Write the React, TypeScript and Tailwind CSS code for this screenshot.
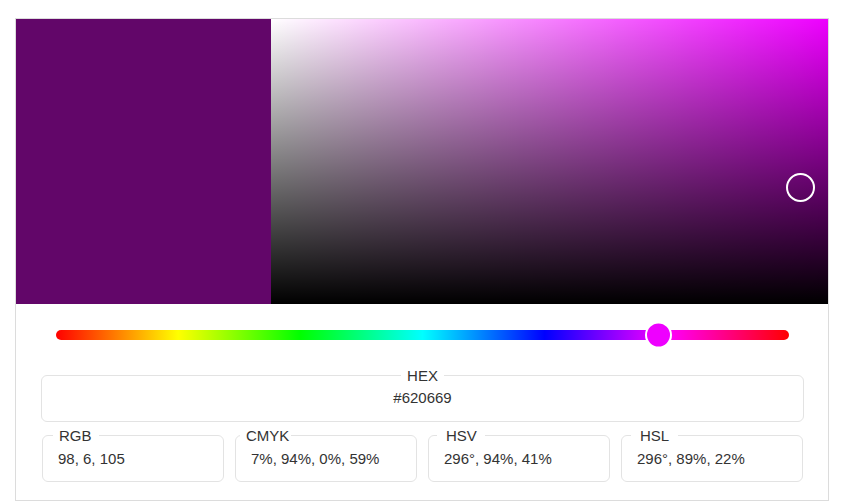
import React from "react";

type Field = { label: string; value: string; cls: string };

const fields: Field[] = [
  { label: "RGB", value: "98, 6, 105", cls: "ml-[10px] pl-[6px] pr-[7px]" },
  { label: "CMYK", value: "7%, 94%, 0%, 59%", cls: "ml-[4px] pl-[6px] pr-[2px]" },
  { label: "HSV", value: "296°, 94%, 41%", cls: "ml-[8px] pl-[9px] pr-[8px]" },
  { label: "HSL", value: "296°, 89%, 22%", cls: "ml-[9px] pl-[9px] pr-[9px]" },
];

export default function App() {
  return (
    <div
      className="bg-white pt-[18px] pl-[15px] text-[#333] text-[15px]"
      style={{ fontFamily: '"Liberation Sans", Arial, sans-serif' }}
    >
      <div className="w-[814px] h-[483px] border border-[#dcdcdc] flex flex-col">
        <div className="flex h-[285px]">
          <div className="w-[255px] bg-[#620669]" />
          <div className="relative flex-1 bg-[#ee00ff]">
            <div className="absolute inset-0 bg-[linear-gradient(to_right,#ffffff,rgba(255,255,255,0))]" />
            <div className="absolute inset-0 bg-[linear-gradient(to_bottom,rgba(0,0,0,0),#000000)]" />
            <div className="absolute left-[515px] top-[154px] w-[29px] h-[29px] rounded-full border-2 border-white" />
          </div>
        </div>

        <div className="pt-[26px] pl-[40px]">
          <div className="relative w-[733px] h-[10px] rounded-full bg-[linear-gradient(to_right,#ff0000_0%,#ffff00_16.66%,#00ff00_33.33%,#00ffff_50%,#0000ff_66.66%,#ff00ff_83.33%,#ff0000_100%)]">
            <div className="absolute left-[589px] top-1/2 -translate-y-1/2 w-[27px] h-[27px] rounded-full bg-[#ee00ff] border-2 border-white" />
          </div>
        </div>

        <div className="pl-[25px] mt-[27px]">
          <fieldset className="w-[763px] h-[55px] border border-[#e3e3e3] rounded-[6px] text-center">
            <legend className="mx-auto px-[6px] leading-[17px]">HEX</legend>
            <div className="mt-[5px] leading-[17px]">#620669</div>
          </fieldset>
        </div>

        <div className="pl-[26px] mt-[5px] flex gap-[11px]">
          {fields.map((f) => (
            <fieldset
              key={f.label}
              className="w-[182px] h-[55px] border border-[#e3e3e3] rounded-[6px]"
            >
              <legend className={`${f.cls} leading-[17px]`}>{f.label}</legend>
              <div className="mt-[6px] pl-[15px] leading-[17px]">{f.value}</div>
            </fieldset>
          ))}
        </div>
      </div>
    </div>
  );
}
